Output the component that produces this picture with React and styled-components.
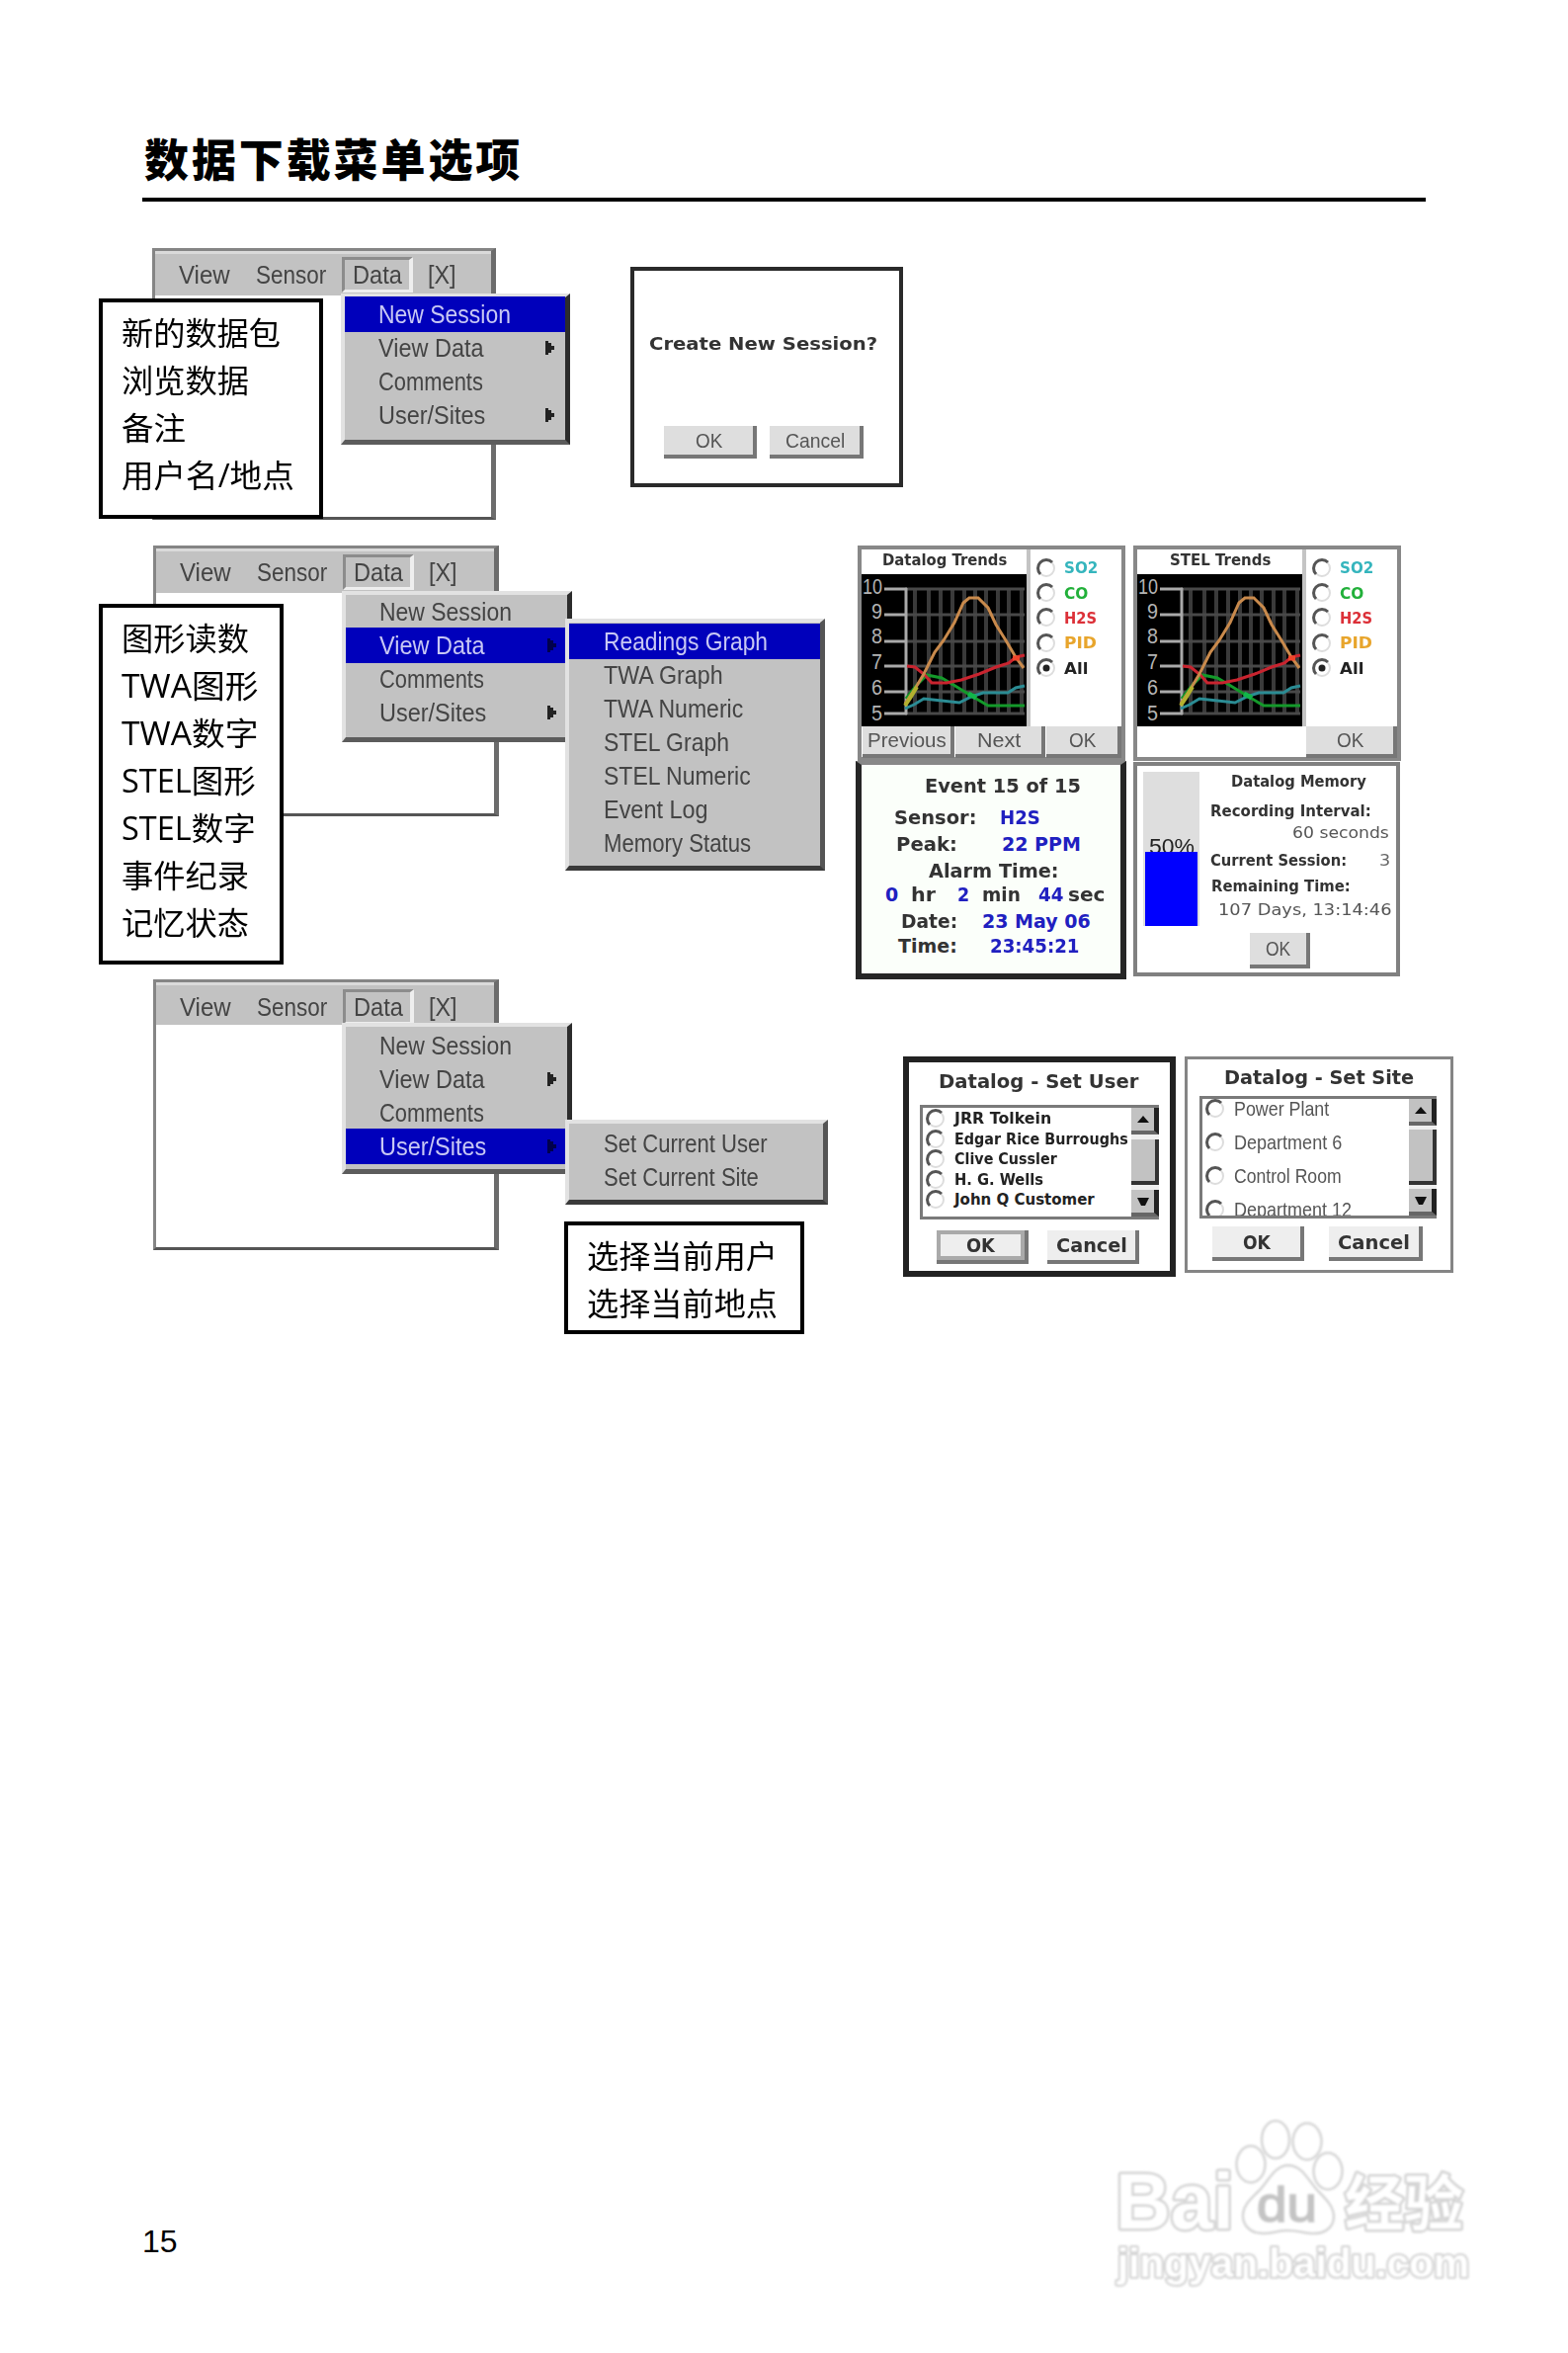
import React, { useLayoutEffect, useRef, useState } from "react";
import styled, { createGlobalStyle } from "styled-components";

// Squeezes or stretches a label so that it takes exactly `w` pixels
const Fit = ({ w, gap = 0, color, children }) => {
  const ref = useRef(null);
  const [scale, setScale] = useState(1);
  useLayoutEffect(() => {
    setScale(w / ref.current.offsetWidth);
  }, [w, children]);
  return (
    <FitBox $w={w} $gap={gap} $color={color}>
      <FitText ref={ref} style={{ transform: `scaleX(${scale})` }}>
        {children}
      </FitText>
    </FitBox>
  );
};

const Menu = ({ items, ...place }) => (
  <MenuBox {...place}>
    {items.map(([text, w, arrow, selected]) => (
      <MenuItem key={text} $selected={selected} $sub={place.$sub}>
        <Fit w={w}>{text}</Fit>
        {arrow && (
          <Arrow width="10" height="14" viewBox="0 0 10 14">
            <path d="M0 0h3v2h3v3h3v4h-3v3h-3v2h-3z" fill={selected ? "#00004c" : "#222"} />
          </Arrow>
        )}
      </MenuItem>
    ))}
  </MenuBox>
);

const MenuWindow = ({ $left, $w, $h, $bar, $pad }) => (
  <Window $left={$left} $w={$w} $h={$h}>
    <MenuBar $h={$bar} $pad={$pad}>
      <Fit w={52} gap={24}>View</Fit>
      <Fit w={71} gap={26}>Sensor</Fit>
      <ActiveTab>
        <Fit w={50}>Data</Fit>
      </ActiveTab>
      <Fit w={29} gap={15}>[X]</Fit>
    </MenuBar>
  </Window>
);

const Note = ({ lines, ...place }) => (
  <NoteBox {...place}>
    {lines.map(([text, w]) => (
      <NoteLine key={text}>
        <Fit w={w}>{text}</Fit>
      </NoteLine>
    ))}
  </NoteBox>
);

const Radio = ({ checked }) => (
  <svg width="20" height="20" viewBox="0 0 20 20">
    <circle cx="10" cy="10" r="8" fill="#fff" stroke="#ddd" strokeWidth="2" />
    <path d="M4 16A8.4 8.4 0 0 1 16 4" fill="none" stroke="#555" strokeWidth="3" />
    {checked && <circle cx="10" cy="10" r="3.5" fill="#222" />}
  </svg>
);

const ticks = [
  [10, 15, 12],
  [9, 41, 37],
  [8, 68, 62],
  [7, 93, 88],
  [6, 119, 114],
  [5, 141, 140],
];
const columns = [54, 68, 80, 92, 104, 115, 126, 138, 149, 162];
const curves = [
  ["#2b8c94", "44,136 53,132 63,126 81,128 99,130 111,124 123,120 148,120 156,115 165,113"],
  ["#14992a", "45,126 56,112 66,102 81,105 93,112 111,123 128,133 165,133"],
  ["#c9242f", "46,93 54,94 64,102 71,110 86,110 101,107 119,101 136,94 149,90 156,84 165,82"],
  ["#c98a4c", "44,131 54,116 63,101 74,79 83,67 94,49 103,29 109,24 118,24 128,34 136,51 146,67 156,84 164,95"],
];

const Chart = () => (
  <svg width="167" height="154" viewBox="0 0 167 154">
    <rect width="167" height="154" fill="#000" />
    {columns.map((x) => (
      <path key={x} d={`M${x} 15V142`} stroke="#3a3a3a" strokeWidth="4" />
    ))}
    {ticks.map(([n, y, ty]) => (
      <g key={n}>
        <path d={`M44 ${y}H165`} stroke="#484848" strokeWidth="3" />
        <path d={`M23 ${y}H46`} stroke="#aaa" strokeWidth="3" />
        <text
          x="21"
          y={ty + 8}
          fill="#b4b4b4"
          fontFamily="Liberation Sans, sans-serif"
          fontSize="22"
          textAnchor="end"
          textLength={n === 10 ? 20 : 11}
          lengthAdjust="spacingAndGlyphs"
        >
          {n}
        </text>
      </g>
    ))}
    <path d="M45 14V142" stroke="#aaa" strokeWidth="3" />
    {curves.map(([color, points]) => (
      <polyline key={color} points={points} fill="none" stroke={color} strokeWidth="3" />
    ))}
    <path d="M44 133l6-9 6-10" stroke="#b3b12f" strokeWidth="4" fill="none" />
    <path d="M108 121l8 4" stroke="#12b54a" strokeWidth="5" />
    <path d="M153 85h7" stroke="#f0452a" strokeWidth="5" />
  </svg>
);

const gases = [
  ["SO2", 34, "#35b5bd"],
  ["CO", 24, "#22b03a"],
  ["H2S", 33, "#dc3038"],
  ["PID", 33, "#e8a52c"],
  ["All", 24, "#222"],
];

const Trends = ({ title, w, children, ...frame }) => (
  <Frame $w={271} $h={218} $b={4} $color="#888" {...frame}>
    <TrendsBody>
      <TrendsChart>
        <ChartTitle>
          <Fit w={w}>{title}</Fit>
        </ChartTitle>
        <Chart />
      </TrendsChart>
      <Gases>
        {gases.map(([name, gw, color]) => (
          <Gas key={name}>
            <Radio checked={name === "All"} />
            <Fit w={gw} gap={8} color={color}>{name}</Fit>
          </Gas>
        ))}
      </Gases>
    </TrendsBody>
    <TrendsButtons>{children}</TrendsButtons>
  </Frame>
);

const ScrollBar = ({ thumb }) => (
  <Scroll>
    <ScrollKey>
      <svg width="12" height="7" viewBox="0 0 12 7"><path d="M6 0l6 7H0z" fill="#111" /></svg>
    </ScrollKey>
    <Thumb $h={thumb} />
    <ScrollKey>
      <svg width="12" height="8" viewBox="0 0 12 8"><path d="M0 0h12l-4 8H4z" fill="#111" /></svg>
    </ScrollKey>
  </Scroll>
);

const users = [
  ["JRR Tolkein", 98],
  ["Edgar Rice Burroughs", 176],
  ["Clive Cussler", 104],
  ["H. G. Wells", 90],
  ["John Q Customer", 142],
];
const sites = [
  ["Power Plant", 96],
  ["Department 6", 109],
  ["Control Room", 109],
  ["Department 12", 119],
];

const Watermark = () => (
  <WatermarkSvg width="380" height="200" viewBox="0 0 380 200">
    <g fill="#fff" stroke="#d6d6d6" strokeWidth="2.5">
      <ellipse cx="146" cy="60" rx="14.5" ry="18.5" />
      <ellipse cx="171" cy="35" rx="14" ry="19" />
      <ellipse cx="203" cy="37" rx="14.5" ry="18.5" />
      <ellipse cx="224" cy="67" rx="14.5" ry="18.5" />
      <path d="M183 61C198 61 203 75 214 87C224 97 230 104 230 113C230 125 219 131 207 130C197 129 193 127 183 127C174 127 168 130 158 130C146 130 137 122 138 110C139 101 146 95 153 88C163 79 169 62 183 61Z" />
    </g>
    <g
      fill="#fff"
      stroke="#d4d4d4"
      strokeWidth="5"
      strokeLinejoin="round"
      paintOrder="stroke"
      fontFamily="Liberation Sans, Noto Sans CJK SC, sans-serif"
      fontWeight="700"
    >
      <text x="9" y="125" fontSize="80" textLength="120" lengthAdjust="spacingAndGlyphs">Bai</text>
      <text x="241" y="122" fontSize="61" textLength="120" lengthAdjust="spacingAndGlyphs">经验</text>
      <text x="11" y="174" fontSize="40" strokeWidth="4" textLength="356" lengthAdjust="spacingAndGlyphs">jingyan.baidu.com</text>
    </g>
    <text x="152" y="118" fontSize="50" fontFamily="Liberation Sans, sans-serif" fill="#c4c4c4" stroke="#c4c4c4" strokeWidth="1.5" textLength="61" lengthAdjust="spacingAndGlyphs">du</text>
  </WatermarkSvg>
);

export default function App() {
  return (
    <Page>
      <GlobalStyle />
      <Header>
        <Title>数据下载菜单选项</Title>
      </Header>

      <Section $h={301}>
        <MenuWindow $left={154} $w={348} $h={275} $bar={45} />
        <Menu
          $left={345}
          $top={46}
          $w={232}
          items={[
            ["New Session", 134, false, true],
            ["View Data", 107, true],
            ["Comments", 106],
            ["User/Sites", 108, true],
          ]}
        />
        <Note
          $left={100}
          $top={51}
          $w={227}
          $h={223}
          lines={[["新的数据包", 161], ["浏览数据", 129], ["备注", 65], ["用户名/地点", 175]]}
        />
        <Frame $w={276} $h={223} $b={4} $color="#2a2a2a" $ml={136} $mt={19}>
          <DialogText $mt={62}>
            <Fit w={231} gap={15}>Create New Session?</Fit>
          </DialogText>
          <Buttons $mt={71} $ml={30} $gap={13}>
            <Button $w={94} $h={33}><Fit w={27}>OK</Fit></Button>
            <Button $w={95} $h={33}><Fit w={60}>Cancel</Fit></Button>
          </Buttons>
        </Frame>
      </Section>

      <Section $h={439}>
        <MenuWindow $left={155} $w={350} $h={274} $bar={45} />
        <Menu
          $left={346}
          $top={46}
          $w={233}
          items={[
            ["New Session", 134],
            ["View Data", 107, true, true],
            ["Comments", 106],
            ["User/Sites", 108, true],
          ]}
        />
        <Menu
          $sub
          $left={572}
          $top={74}
          $w={263}
          $pad={2}
          items={[
            ["Readings Graph", 166, false, true],
            ["TWA Graph", 121],
            ["TWA Numeric", 141],
            ["STEL Graph", 127],
            ["STEL Numeric", 149],
            ["Event Log", 106],
            ["Memory Status", 149],
          ]}
        />
        <Note
          $left={100}
          $top={59}
          $w={187}
          $h={365}
          lines={[
            ["图形读数", 129],
            ["TWA图形", 138],
            ["TWA数字", 138],
            ["STEL图形", 136],
            ["STEL数字", 136],
            ["事件纪录", 129],
            ["记忆状态", 129],
          ]}
        />
        <Screens>
          <Trends title="Datalog Trends" w={126} $ml={2}>
            <Button $w={93} $h={32}><Fit w={80}>Previous</Fit></Button>
            <Button $w={91} $h={32}><Fit w={44}>Next</Fit></Button>
            <Button $w={76} $h={32}><Fit w={27}>OK</Fit></Button>
          </Trends>
          <Trends title="STEL Trends" w={102} $ml={0}>
            <Button $w={92} $h={32}><Fit w={27}>OK</Fit></Button>
          </Trends>

          <EventFrame $w={274} $h={221} $b={6} $color="#262626">
            <EventLine $mt={4} $h={34}><Fit w={158} gap={64}>Event 15 of 15</Fit></EventLine>
            <EventLine $h={29}>
              <Fit w={83} gap={33}>Sensor:</Fit>
              <Fit w={41} gap={24} color="#2020c0">H2S</Fit>
            </EventLine>
            <EventLine $h={26}>
              <Fit w={62} gap={35}>Peak:</Fit>
              <Fit w={80} gap={45} color="#2020c0">22 PPM</Fit>
            </EventLine>
            <EventLine $h={28}><Fit w={132} gap={68}>Alarm Time:</Fit></EventLine>
            <EventLine $h={19}>
              <Fit w={13} gap={24} color="#2020c0">0</Fit>
              <Fit w={25} gap={13}>hr</Fit>
              <Fit w={12} gap={22} color="#2020c0">2</Fit>
              <Fit w={39} gap={13}>min</Fit>
              <Fit w={25} gap={18} color="#2020c0">44</Fit>
              <Fit w={37} gap={5}>sec</Fit>
            </EventLine>
            <EventLine $h={35}>
              <Fit w={57} gap={40}>Date:</Fit>
              <Fit w={110} gap={25} color="#2020c0">23 May 06</Fit>
            </EventLine>
            <EventLine $h={16}>
              <Fit w={60} gap={37}>Time:</Fit>
              <Fit w={91} gap={33} color="#2020c0">23:45:21</Fit>
            </EventLine>
          </EventFrame>

          <Frame $w={270} $h={217} $b={4} $color="#808080" $mt={1}>
            <MemoryBody>
              <Gauge>
                <GaugeLabel><Fit w={46}>50%</Fit></GaugeLabel>
                <GaugeFill />
              </Gauge>
              <MemoryText>
                <MemoryLine $h={30} $size={16}><Fit w={137} gap={32}>Datalog Memory</Fit></MemoryLine>
                <MemoryLine $h={31} $size={16}><Fit w={163} gap={11}>Recording Interval:</Fit></MemoryLine>
                <MemoryLine $h={12} $light><Fit w={98} gap={94}>60 seconds</Fit></MemoryLine>
                <MemoryLine $h={44} $size={16}>
                  <Fit w={138} gap={11}>Current Session:</Fit>
                  <LightLabel><Fit w={11} gap={33}>3</Fit></LightLabel>
                </MemoryLine>
                <MemoryLine $h={8} $size={16}><Fit w={141} gap={12}>Remaining Time:</Fit></MemoryLine>
                <MemoryLine $h={40} $light><Fit w={176} gap={19}>107 Days, 13:14:46</Fit></MemoryLine>
              </MemoryText>
            </MemoryBody>
            <Buttons $mt={7} $ml={114}>
              <Button $w={61} $h={36}><Fit w={25}>OK</Fit></Button>
            </Buttons>
          </Frame>
        </Screens>
      </Section>

      <Section $h={359}>
        <MenuWindow $left={155} $w={350} $h={274} $bar={43} $pad={4} />
        <Menu
          $left={346}
          $top={44}
          $w={233}
          $pad={2}
          items={[
            ["New Session", 134],
            ["View Data", 107, true],
            ["Comments", 106],
            ["User/Sites", 108, true, true],
          ]}
        />
        <Menu
          $sub
          $left={572}
          $top={142}
          $w={266}
          $pad={3}
          items={[["Set Current User", 166], ["Set Current Site", 157]]}
        />
        <Note
          $left={571}
          $top={245}
          $w={243}
          $h={114}
          $pl={19}
          $pt={7}
          lines={[["选择当前用户", 193], ["选择当前地点", 193]]}
        />
        <Frame $w={276} $h={223} $b={6} $color="#222" $ml={409} $mt={78}>
          <DialogText $mt={7} $size={20}>
            <Fit w={202} gap={30}>Datalog - Set User</Fit>
          </DialogText>
          <List $ml={11} $mt={12} $w={242} $h={116}>
            <ListItems $mt={1}>
              {users.map(([name, w]) => (
                <ListItem key={name} $h={20.5} $bold>
                  <Radio />
                  <Fit w={w} gap={9}>{name}</Fit>
                </ListItem>
              ))}
            </ListItems>
            <ScrollBar thumb={46} />
          </List>
          <Buttons $mt={11} $ml={28} $gap={19}>
            <Button $w={93} $h={34} $bold $focus><Fit w={29}>OK</Fit></Button>
            <Button $w={93} $h={34} $bold><Fit w={72}>Cancel</Fit></Button>
          </Buttons>
        </Frame>
        <Frame $w={272} $h={219} $b={3} $color="#858585" $ml={9} $mt={78}>
          <DialogText $mt={6} $size={20}>
            <Fit w={192} gap={37}>Datalog - Set Site</Fit>
          </DialogText>
          <List $ml={12} $mt={7} $w={240} $h={124}>
            <ListItems $mt={-7}>
              {sites.map(([name, w]) => (
                <ListItem key={name} $h={33.9}>
                  <Radio />
                  <Fit w={w} gap={9}>{name}</Fit>
                </ListItem>
              ))}
            </ListItems>
            <ScrollBar thumb={56} />
          </List>
          <Buttons $mt={8} $ml={25} $gap={25}>
            <Button $w={93} $h={35} $bold><Fit w={28}>OK</Fit></Button>
            <Button $w={95} $h={35} $bold><Fit w={73}>Cancel</Fit></Button>
          </Buttons>
        </Frame>
      </Section>

      <Footer>
        <PageNumber>15</PageNumber>
        <Watermark />
      </Footer>
    </Page>
  );
}

const GlobalStyle = createGlobalStyle`
  * {
    box-sizing: border-box;
  }
  body {
    margin: 0;
    background: #fff;
  }
`;

const Page = styled.div`
  display: flex;
  flex-direction: column;
  width: 1587px;
  height: 2381px;
  overflow: hidden;
  background: #fff;
  font-family: "Liberation Sans", sans-serif;
`;

const Header = styled.header`
  height: 74px;
  margin: 130px 144px 47px;
  border-bottom: 4px solid #000;
`;

const Title = styled.h1`
  margin: 0;
  padding-left: 2px;
  font-family: "Noto Sans CJK SC", sans-serif;
  font-size: 45px;
  font-weight: 900;
  line-height: 60px;
  letter-spacing: 2.9px;
`;

const Section = styled.section`
  position: relative;
  display: flex;
  align-items: flex-start;
  height: ${(p) => p.$h}px;
`;

const FitBox = styled.span`
  display: inline-block;
  flex: none;
  width: ${(p) => p.$w}px;
  margin-left: ${(p) => p.$gap}px;
  color: ${(p) => p.$color || "inherit"};
  white-space: nowrap;
`;

const FitText = styled.span`
  display: inline-block;
  transform-origin: 0 50%;
`;

const Window = styled.div`
  flex: none;
  width: ${(p) => p.$w}px;
  height: ${(p) => p.$h}px;
  margin-left: ${(p) => p.$left}px;
  border: 3px solid #858585;
  border-right: 5px solid #6c6c6c;
  border-bottom-color: #555;
`;

const MenuBar = styled.div`
  display: flex;
  align-items: center;
  height: ${(p) => p.$h}px;
  padding-top: ${(p) => p.$pad || 0}px;
  background: #c2c2c2;
  border-top: 3px solid #dadada;
  color: #444;
  font-size: 25px;
`;

const ActiveTab = styled.div`
  display: flex;
  align-items: center;
  width: 72px;
  height: 36px;
  margin-left: 16px;
  padding-left: 8px;
  border: 3px solid #8c8c8c;
  border-right: 4px solid #eee;
  border-bottom-color: #eee;
`;

const MenuBox = styled.div`
  position: absolute;
  left: ${(p) => p.$left}px;
  top: ${(p) => p.$top}px;
  width: ${(p) => p.$w}px;
  padding: ${(p) => p.$pad || 0}px 0 ${(p) => (p.$pad ? 6 : 8)}px;
  background: #c2c2c2;
  border: solid;
  border-width: 4px 5px 5px 4px;
  border-color: #e2e2e2 ${(p) => (p.$sub ? "#555" : "#2c2c2c")} ${(p) => (p.$sub ? "#3a3a3a" : "#5c5c5c")} #e2e2e2;
`;

const MenuItem = styled.div`
  display: flex;
  align-items: center;
  justify-content: space-between;
  height: 34px;
  padding: 0 10px 0 ${(p) => (p.$sub ? 35 : 34)}px;
  font-size: 25px;
  color: ${(p) => (p.$selected ? "#c8c8f4" : "#444")};
  background: ${(p) => (p.$selected ? "#0000bb" : "none")};
  box-shadow: ${(p) => (p.$selected ? "0 1px #0000bb, 0 -1px #0000bb" : "none")};
`;

const Arrow = styled.svg`
  flex: none;
`;

const NoteBox = styled.div`
  position: absolute;
  left: ${(p) => p.$left}px;
  top: ${(p) => p.$top}px;
  width: ${(p) => p.$w}px;
  height: ${(p) => p.$h}px;
  padding: ${(p) => p.$pt || 7}px 0 0 ${(p) => p.$pl || 19}px;
  border: 4px solid #000;
  background: #fff;
`;

const NoteLine = styled.div`
  height: 48px;
  font-family: "Open Sans", "Noto Sans CJK SC", sans-serif;
  font-size: 32px;
  line-height: 48px;
`;

const Frame = styled.div`
  flex: none;
  width: ${(p) => p.$w}px;
  height: ${(p) => p.$h}px;
  margin-left: ${(p) => p.$ml || 0}px;
  margin-top: ${(p) => p.$mt || 0}px;
  border: ${(p) => p.$b}px solid ${(p) => p.$color};
  background: #fff;
`;

const EventFrame = styled(Frame)`
  border-top: 4px solid #888;
  background: #fbfffa;
`;

const DialogText = styled.div`
  margin-top: ${(p) => p.$mt}px;
  font-family: "DejaVu Sans", sans-serif;
  font-size: ${(p) => p.$size || 18}px;
  font-weight: 700;
  line-height: 24px;
  color: #333;
`;

const Buttons = styled.div`
  display: flex;
  gap: ${(p) => p.$gap || 0}px;
  margin: ${(p) => p.$mt}px 0 0 ${(p) => p.$ml}px;
`;

const Button = styled.div`
  display: flex;
  align-items: center;
  justify-content: center;
  width: ${(p) => p.$w}px;
  height: ${(p) => p.$h}px;
  background: ${(p) => (p.$bold ? "#eee" : "#dedede")};
  border: solid #777;
  border-width: 0 4px 4px 0;
  box-shadow: ${(p) => (p.$focus ? "inset 0 0 0 4px #aaa" : "none")};
  font-family: ${(p) => (p.$bold ? '"DejaVu Sans"' : '"Liberation Sans"')}, sans-serif;
  font-size: ${(p) => (p.$bold ? 19 : 21)}px;
  font-weight: ${(p) => (p.$bold ? 700 : 400)};
  color: ${(p) => (p.$bold ? "#333" : "#555")};
`;

const Screens = styled.div`
  display: grid;
  grid-template-columns: 274px 270px;
  grid-template-rows: 218px 221px;
  column-gap: 7px;
  margin-left: 361px;
`;

const TrendsBody = styled.div`
  display: flex;
  height: 179px;
`;

const TrendsChart = styled.div`
  width: 171px;
  border-right: 4px solid #c4c4c4;
  svg {
    display: block;
  }
`;

const ChartTitle = styled.div`
  height: 25px;
  text-align: center;
  font-family: "DejaVu Sans", sans-serif;
  font-size: 16px;
  font-weight: 700;
  line-height: 22px;
  color: #333;
`;

const Gases = styled.div`
  padding: 6px 0 0 6px;
`;

const Gas = styled.div`
  display: flex;
  align-items: center;
  height: 25.4px;
  font-family: "DejaVu Sans", sans-serif;
  font-size: 16px;
  font-weight: 700;
`;

const TrendsButtons = styled.div`
  display: flex;
  justify-content: flex-end;
  gap: 1px;
`;

const EventLine = styled.div`
  display: flex;
  align-items: center;
  height: ${(p) => p.$h}px;
  margin-top: ${(p) => p.$mt || 0}px;
  font-family: "DejaVu Sans", sans-serif;
  font-size: 19px;
  font-weight: 700;
  color: #333;
`;

const MemoryBody = styled.div`
  display: flex;
  height: 162px;
  padding: 6px 0 0 6px;
`;

const Gauge = styled.div`
  display: flex;
  flex-direction: column;
  width: 57px;
  height: 156px;
  padding: 66px 2px 0;
  background: #dedede;
`;

const GaugeLabel = styled.div`
  height: 15px;
  overflow: hidden;
  padding-left: 4px;
  font-size: 22px;
  line-height: 20px;
  color: #222;
`;

const GaugeFill = styled.div`
  flex: 1;
  background: #0000ff;
`;

const MemoryText = styled.div`
  margin-top: -6px;
`;

const LightLabel = styled.span`
  font-weight: 400;
  color: #666;
`;

const MemoryLine = styled.div`
  display: flex;
  align-items: center;
  height: ${(p) => p.$h}px;
  font-family: "DejaVu Sans", sans-serif;
  font-size: 16px;
  font-weight: ${(p) => (p.$light ? 400 : 700)};
  color: ${(p) => (p.$light ? "#555" : "#333")};
`;

const List = styled.div`
  display: flex;
  width: ${(p) => p.$w}px;
  height: ${(p) => p.$h}px;
  margin: ${(p) => p.$mt}px 0 0 ${(p) => p.$ml}px;
  border: 3px solid #7a7a7a;
  border-right: 0;
  overflow: hidden;
`;

const ListItems = styled.div`
  flex: 1;
  margin-top: ${(p) => p.$mt}px;
  padding-left: 3px;
`;

const ListItem = styled.div`
  display: flex;
  align-items: center;
  height: ${(p) => p.$h}px;
  font-family: ${(p) => (p.$bold ? '"DejaVu Sans"' : '"Liberation Sans"')}, sans-serif;
  font-size: ${(p) => (p.$bold ? 15 : 21)}px;
  font-weight: ${(p) => (p.$bold ? 700 : 400)};
  color: ${(p) => (p.$bold ? "#222" : "#555")};
`;

const Scroll = styled.div`
  display: flex;
  flex-direction: column;
  justify-content: space-between;
  width: 28px;
  background: #eee;
`;

const ScrollKey = styled.div`
  display: flex;
  align-items: center;
  justify-content: center;
  height: 27px;
  background: #c2c2c2;
  border: solid #222;
  border-width: 0 5px 4px 0;
  border-bottom-color: #666;
`;

const Thumb = styled.div`
  height: ${(p) => p.$h}px;
  background: #c2c2c2;
  border: solid #333;
  border-width: 0 4px 4px 0;
`;

const Footer = styled.footer`
  display: flex;
  justify-content: space-between;
  margin: 780px 87px 0 144px;
`;

const PageNumber = styled.div`
  margin-top: 120px;
  font-size: 32px;
  line-height: 36px;
`;

const WatermarkSvg = styled.svg`
  filter: blur(1px);
`;
